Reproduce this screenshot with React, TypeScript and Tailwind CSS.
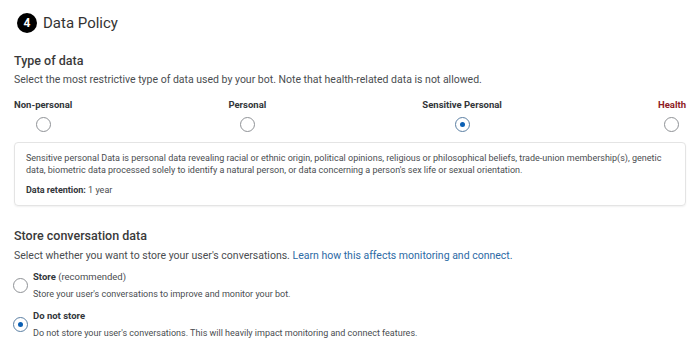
import React from "react";

function Radio({ checked }: { checked?: boolean }) {
  return (
    <span
      className={`w-[15px] h-[15px] rounded-full border flex items-center justify-center bg-white shrink-0 ${
        checked ? "border-[#5b7fa3]" : "border-[#8f9296]"
      }`}
    >
      {checked && <span className="w-[5px] h-[5px] rounded-full bg-[#0a5fb4]" />}
    </span>
  );
}

const dataTypes = [
  { label: "Non-personal", checked: false, danger: false },
  { label: "Personal", checked: false, danger: false },
  { label: "Sensitive Personal", checked: true, danger: false },
  { label: "Health", checked: false, danger: true },
];

export default function App() {
  return (
    <div
      className="w-[700px] h-[358px] bg-white text-[#32363a] px-[14px] overflow-hidden"
      style={{ fontFamily: "Roboto, 'Noto Sans', sans-serif" }}
    >
      {/* Header */}
      <div className="flex items-center gap-[6px] pt-[12px] pl-[3px]">
        <span className="w-[20px] h-[20px] rounded-full bg-black text-white text-[12px] font-bold flex items-center justify-center">
          4
        </span>
        <h1 className="text-[15px] leading-[22px] text-[#333]">Data Policy</h1>
      </div>

      {/* Type of data */}
      <h2 className="mt-[18px] text-[12.5px] leading-[18px] font-medium text-[#3a3a3a]">Type of data</h2>
      <p className="mt-[2px] text-[10.5px] leading-[16px] text-[#4a4d50]">
        Select the most restrictive type of data used by your bot. Note that health-related data is not allowed.
      </p>

      <div className="mt-[10px] flex justify-between">
        {dataTypes.map((t) => (
          <div key={t.label} className="flex flex-col items-center">
            <span
              className={`text-[9.5px] leading-[13px] font-bold ${t.danger ? "text-[#8e1b24]" : "text-[#32363a]"}`}
            >
              {t.label}
            </span>
            <div className="mt-[6px]">
              <Radio checked={t.checked} />
            </div>
          </div>
        ))}
      </div>

      <div className="mt-[10px] border border-[#e4e4e4] rounded-[4px] shadow-[0_1px_2px_rgba(0,0,0,0.06)] px-[11px] pt-[9px] pb-[9px]">
        <p className="text-[9px] leading-[12px] text-[#4a4d50]">
          Sensitive personal Data is personal data revealing racial or ethnic origin, political opinions, religious or
          philosophical beliefs, trade-union membership(s), genetic data, biometric data processed solely to identify a
          natural person, or data concerning a person's sex life or sexual orientation.
        </p>
        <p className="mt-[8px] text-[9px] leading-[12px] text-[#4a4d50]">
          <span className="font-bold text-[#32363a]">Data retention:</span> 1 year
        </p>
      </div>

      {/* Store conversation data */}
      <h2 className="mt-[21px] text-[12.5px] leading-[18px] font-medium text-[#3a3a3a]">Store conversation data</h2>
      <p className="mt-[3px] text-[10.5px] leading-[16px] text-[#4a4d50]">
        Select whether you want to store your user's conversations.{" "}
        <span className="text-[#2d6aa5]">Learn how this affects monitoring and connect.</span>
      </p>

      <div className="mt-[6px] flex flex-col gap-[8px]">
        <div className="flex items-center gap-[5px] -ml-[1px]">
          <Radio />
          <div className="flex flex-col">
            <span className="text-[9.5px] leading-[14px] text-[#4a4d50]">
              <span className="font-bold text-[#32363a]">Store</span> (recommended)
            </span>
            <span className="mt-[4px] text-[9px] leading-[13px] text-[#4a4d50]">
              Store your user's conversations to improve and monitor your bot.
            </span>
          </div>
        </div>
        <div className="flex items-center gap-[5px] -ml-[1px]">
          <Radio checked />
          <div className="flex flex-col">
            <span className="text-[9.5px] leading-[14px] font-bold text-[#32363a]">Do not store</span>
            <span className="mt-[4px] text-[9px] leading-[13px] text-[#4a4d50]">
              Do not store your user's conversations. This will heavily impact monitoring and connect features.
            </span>
          </div>
        </div>
      </div>
    </div>
  );
}
